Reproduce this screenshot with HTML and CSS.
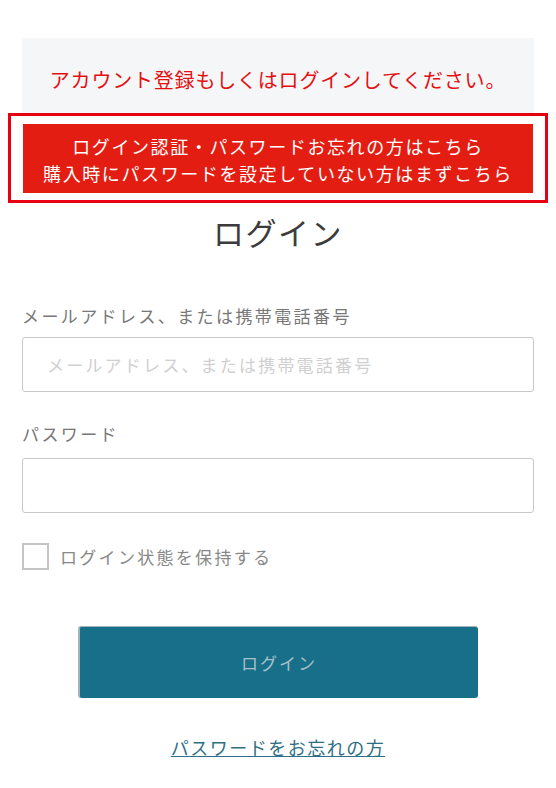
FILE: index.html
```html
<!DOCTYPE html>
<html lang="ja">
<head>
  <meta charset="UTF-8">
  <title>ログイン</title>
  <link rel="stylesheet" href="styles.css">
</head>
<body>

<div class="aviso">
  <p>アカウント登録もしくはログインしてください。</p>
</div>

<div class="marco">
  <a class="btn-aviso" href="#">ログイン認証・パスワードお忘れの方はこちら<br>購入時にパスワードを設定していない方はまずこちら</a>
</div>

<main>
  <h2 class="titulo">ログイン</h2>

  <form id="formLogin">
    <label for="usuario">メールアドレス、または携帯電話番号</label>
    <input type="text" id="usuario" placeholder="メールアドレス、または携帯電話番号">

    <label for="clave">パスワード</label>
    <input type="password" id="clave">

    <div class="recordar">
      <span class="casilla"></span>
      <span>ログイン状態を保持する</span>
    </div>

    <button type="submit" class="btn-login">ログイン</button>

    <div class="olvido">
      <a href="#">パスワードをお忘れの方</a>
    </div>
  </form>
</main>

</body>
</html>
```

FILE: styles.css
```css
* {
  box-sizing: border-box;
  font-family: "Noto Sans CJK JP", "Noto Sans", sans-serif;
  margin: 0;
  padding: 0;
}

body {
  background-color: #fff;
  padding-top: 38px;
}

.aviso {
  margin: 0 22px;
  background-color: #f4f6f8;
  padding: 28px 0 19px;
  text-align: center;
}

.aviso p {
  color: #e50f12;
  font-size: 20px;
  line-height: 28px;
  letter-spacing: 0.8px;
}

.marco {
  margin: 0 8px;
  border: 3px solid #e60012;
  padding: 8px 12px 7px;
}

.btn-aviso {
  display: block;
  background-color: #e41d13;
  color: #fff;
  text-decoration: none;
  text-align: center;
  font-size: 18px;
  line-height: 27px;
  letter-spacing: 1.6px;
  padding: 9px 0 6px;
}

main {
  padding: 0 22px;
}

.titulo {
  text-align: center;
  font-weight: normal;
  font-size: 31px;
  line-height: 40px;
  letter-spacing: 1.5px;
  color: #3c3c3c;
  margin-top: 9px;
}

label {
  display: block;
  font-size: 17px;
  line-height: 24px;
  letter-spacing: 2.4px;
  color: #777;
  margin-bottom: 9px;
}

label[for="usuario"] {
  margin-top: 52px;
}

label[for="clave"] {
  margin-top: 30px;
  margin-bottom: 12px;
}

input {
  display: block;
  width: 100%;
  height: 55px;
  border: 1px solid #c8c8c8;
  border-radius: 3px;
  padding: 0 24px;
  font-size: 17px;
  letter-spacing: 2.2px;
  color: #333;
}

input::placeholder {
  color: #d0d0d0;
}

.recordar {
  display: flex;
  align-items: center;
  gap: 11px;
  margin-top: 30px;
  font-size: 17px;
  letter-spacing: 2.3px;
  color: #888;
}

.casilla {
  width: 27px;
  height: 27px;
  border: 2px solid #c4c4c4;
}

.btn-login {
  display: block;
  width: 400px;
  height: 72px;
  margin: 56px auto 0;
  background-color: #176f8a;
  color: #a9c0c9;
  border: none;
  border-left: 2px solid #a3b4ba;
  border-top: 1px solid #a3b4ba;
  border-radius: 3px;
  font-size: 17px;
  letter-spacing: 2px;
  cursor: pointer;
}

.olvido {
  text-align: center;
  margin-top: 37px;
}

.olvido a {
  color: #2f6f86;
  font-size: 18px;
  line-height: 24px;
  letter-spacing: 1.5px;
  text-decoration: underline;
}
```
